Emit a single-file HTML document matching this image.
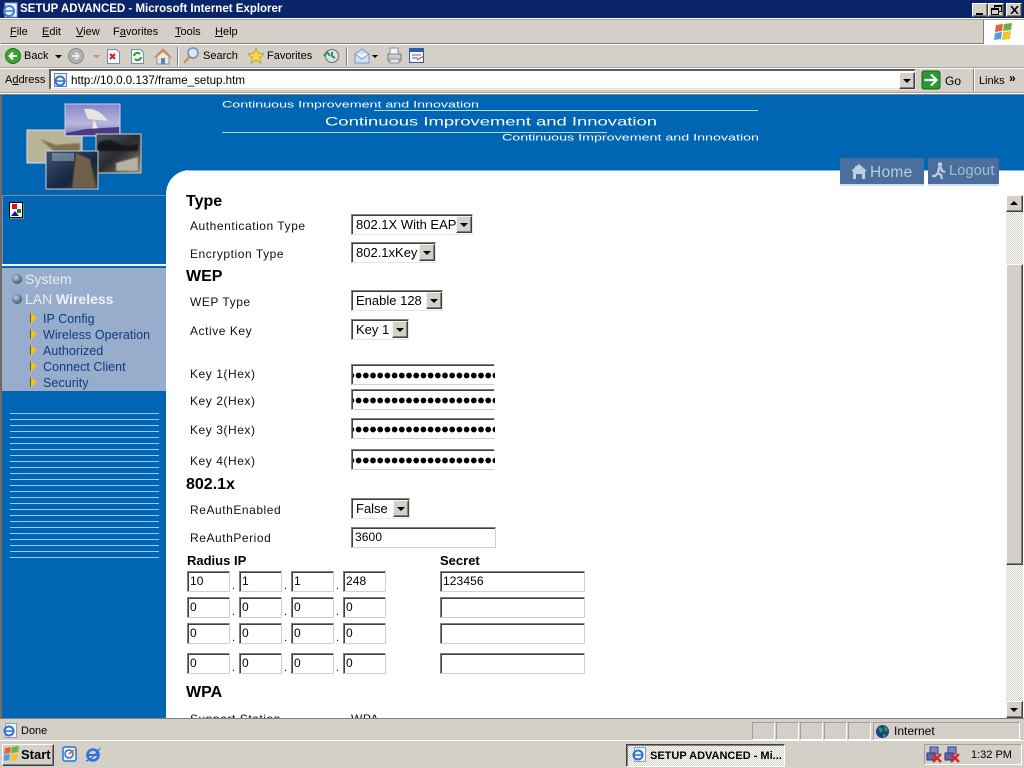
<!DOCTYPE html>
<html><head><meta charset="utf-8"><title>SETUP ADVANCED - Microsoft Internet Explorer</title>
<style>
html,body{margin:0;padding:0;width:1024px;height:768px;overflow:hidden;background:#d4d0c8;font-family:"Liberation Sans",Arial,sans-serif;}
*{box-sizing:border-box}
.a,.t,.l,.h,.s,.i,.k,.n,.m,svg.a{position:absolute}
.t{font-size:11px;line-height:16px;color:#000;white-space:nowrap}
.l{font-size:12px;line-height:16px;color:#111;white-space:nowrap;letter-spacing:.55px;left:190px}
.h{font-size:16px;line-height:18px;font-weight:bold;color:#000;left:186px;white-space:nowrap}
.s{background:#fff;border:1px solid;border-color:#808080 #e8e6e1 #e8e6e1 #808080;box-shadow:inset 1px 1px 0 #404040;font-size:13px;line-height:20px;padding-left:4px;height:21px;color:#000;white-space:nowrap;left:351px}
.s b{position:absolute;right:0;top:1px;width:16px;height:17px;background:#d4d0c8;border:1px solid;border-color:#f4f3f0 #404040 #404040 #f4f3f0;box-shadow:inset -1px -1px 0 #808080}
.s b:after,.dd:after{content:"";position:absolute;left:3px;top:6px;border:4px solid transparent;border-top:4px solid #000;border-bottom:0}
.i{background:#fff;border:1px solid;border-color:#808080 #d4d0c8 #d4d0c8 #808080;box-shadow:inset 1px 1px 0 #404040;font-size:12px;line-height:19px;padding-left:2px;height:21px;color:#000;letter-spacing:.1px;white-space:nowrap}
.k{left:351px;width:144px;height:21px;background-color:#fff;border:1px solid;border-color:#808080 transparent #d4d0c8 #808080;box-shadow:inset 1px 1px 0 #404040;
background-image:radial-gradient(circle at 3.6px 3.5px,#000 2.6px,transparent 3.1px),radial-gradient(circle at 10.8px 3.5px,#000 2.6px,transparent 3.1px),radial-gradient(circle at 18px 3.5px,#000 2.6px,transparent 3.1px),radial-gradient(circle at 25.2px 3.5px,#000 2.6px,transparent 3.1px),radial-gradient(circle at 32.4px 3.5px,#000 2.6px,transparent 3.1px);
background-size:36px 7px;background-repeat:repeat-x;background-position:3px 7px}
.n{font-size:12.5px;line-height:16px;color:#0f3b80;left:43px;white-space:nowrap;letter-spacing:.05px}
.m{left:31px;width:0;height:0;border-left:6px solid #f6c417;border-top:5px solid transparent;border-bottom:5px solid transparent;filter:drop-shadow(-1px 0 0 #6a5a20)}
.b{position:absolute;left:12px;width:10px;height:10px;border-radius:50%;background:radial-gradient(circle at 40% 35%,#c0d0dc,#5a7488 55%,#2c4050)}
.o{position:absolute;background:#d4d0c8;border:1px solid;border-color:#fff #404040 #404040 #fff;box-shadow:inset -1px -1px 0 #808080}
.sep{position:absolute;width:2px;background:#fff;border-left:1px solid #808080}
.pn{position:absolute;top:722px;height:18px;width:23px;border:1px solid;border-color:#a0a0a0 #fff #fff #a0a0a0}
</style></head><body>

<!-- title bar -->
<div class="a" style="left:0;top:0;width:1024px;height:18px;background:#0a246a"></div>
<svg class="a" style="left:2px;top:2px" width="16" height="16" viewBox="0 0 16 16"><rect x="3" y="1" width="12" height="14" fill="#eef2f8" stroke="#8ea0c0"/><circle cx="7" cy="9" r="5" fill="none" stroke="#3a7ed8" stroke-width="2"/><path d="M3 9h8" stroke="#3a7ed8" stroke-width="1.5"/></svg>
<div class="t" style="left:20px;top:1px;color:#fff;font-weight:bold;font-size:11.5px">SETUP ADVANCED - Microsoft Internet Explorer</div>
<div class="o" style="left:972px;top:3px;width:16px;height:14px"><div class="a" style="left:3px;top:9px;width:7px;height:2px;background:#000"></div></div>
<div class="o" style="left:988px;top:3px;width:16px;height:14px"><div class="a" style="left:5px;top:1px;width:8px;height:7px;border:1px solid #000;border-top-width:2px"></div><div class="a" style="left:2px;top:4px;width:8px;height:7px;border:1px solid #000;border-top-width:2px;background:#d4d0c8"></div></div>
<div class="o" style="left:1006px;top:3px;width:16px;height:14px"><svg class="a" style="left:3px;top:2px" width="9" height="8"><path d="M1 0l7 8M8 0l-7 8" stroke="#000" stroke-width="1.6"/></svg></div>

<!-- menu -->
<div class="a" style="left:0;top:18px;width:1024px;height:1px;background:#fff"></div>
<div class="a" style="left:0;top:19px;width:1024px;height:1px;background:#a8a6a0"></div>
<div class="a" style="left:1px;top:43px;width:982px;height:1px;background:#808080"></div>
<div class="a" style="left:0;top:44px;width:1024px;height:1px;background:#fff"></div>
<div class="t" style="left:10px;top:24px"><u>F</u>ile</div>
<div class="t" style="left:42px;top:24px"><u>E</u>dit</div>
<div class="t" style="left:76px;top:24px"><u>V</u>iew</div>
<div class="t" style="left:113px;top:24px">F<u>a</u>vorites</div>
<div class="t" style="left:175px;top:24px"><u>T</u>ools</div>
<div class="t" style="left:215px;top:24px"><u>H</u>elp</div>
<div class="a" style="left:983px;top:20px;width:41px;height:24px;background:#fff;border-left:1px solid #808080"></div>
<svg class="a" style="left:993px;top:22px" width="22" height="20" viewBox="0 0 22 20"><path d="M3 3l7-1-1 7-7 1z" fill="#e8603c"/><path d="M11 2l8-1-1 7-8 1z" fill="#6cb33f"/><path d="M2 11l7-1-1 7-7 1z" fill="#4a9fe8"/><path d="M10 10l8-1-1 8-8 1z" fill="#f6c32c"/></svg>

<!-- toolbar -->
<div class="a" style="left:0;top:67px;width:1024px;height:1px;background:#a8a6a0"></div>
<div class="a" style="left:0;top:68px;width:1024px;height:1px;background:#fff"></div>
<svg class="a" style="left:5px;top:48px" width="170" height="18" viewBox="0 0 170 18">
<circle cx="8" cy="8" r="7.5" fill="#3aa52e" stroke="#1c7a1c"/><path d="M12 8H5M8 4.5L4.5 8 8 11.5" fill="none" stroke="#fff" stroke-width="2"/>
<path d="M50 7h7l-3.500 3.500z" fill="#000"/>
<circle cx="71" cy="8" r="7.500" fill="#b0b0ae" stroke="#8c8c8a"/><path d="M67 8h7M70.500 4.500L74 8l-3.500 3.500" fill="none" stroke="#e8e8e8" stroke-width="2"/>
<path d="M88 7h7l-3.500 3.500z" fill="#a0a0a0"/>
<path d="M102.500 1.500h9l3 3v11h-12z" fill="#f4f6fa" stroke="#7a8ca8"/><path d="M105 6l5 5M110 6l-5 5" stroke="#d0202c" stroke-width="2"/>
<path d="M126.500 1.500h9l3 3v11h-12z" fill="#f4f6fa" stroke="#7a8ca8"/><path d="M129 8a3.500 3.500 0 0 1 6-2M136 9a3.500 3.500 0 0 1-6 2" fill="none" stroke="#2a9a38" stroke-width="2"/>
<path d="M150 9l8-8 8 8h-2v7h-12V9z" fill="#f0e6d8" stroke="#8090a8"/><path d="M150 9l8-8 8 8-2 0-6-5-6 5z" fill="#e88a3c"/><rect x="156" y="10" width="4" height="6" fill="#5a84c0"/>
</svg>
<div class="t" style="left:24px;top:48px">Back</div>
<div class="sep" style="left:177px;top:47px;height:19px"></div>
<svg class="a" style="left:182px;top:47px" width="18" height="18" viewBox="0 0 18 18"><circle cx="11" cy="6" r="5" fill="#d8e8f8" stroke="#6a8cc0" stroke-width="1.500"/><path d="M7 10l-5 6" stroke="#c89a50" stroke-width="2.500"/></svg>
<div class="t" style="left:203px;top:48px">Search</div>
<svg class="a" style="left:248px;top:47px" width="16" height="17" viewBox="0 0 16 17"><path d="M8 1l2.200 5.500 5.800.4-4.500 3.700 1.500 5.700L8 13.200l-5 3.100 1.500-5.700L0 6.900l5.800-.4z" fill="#f8dc3c" stroke="#a89030" stroke-width=".7"/></svg>
<div class="t" style="left:267px;top:48px">Favorites</div>
<svg class="a" style="left:323px;top:48px" width="17" height="16" viewBox="0 0 17 16"><circle cx="9" cy="8" r="6.500" fill="#d8e0e8" stroke="#607080"/><path d="M1 8l3-4 3 4M9 4v4l3 2" fill="none" stroke="#2a8a38" stroke-width="1.800"/></svg>
<div class="sep" style="left:346px;top:47px;height:19px"></div>
<svg class="a" style="left:354px;top:47px" width="80" height="18" viewBox="0 0 80 18"><path d="M1 7l7-5 7 5v9H1z" fill="#cfe0f6" stroke="#7898c8"/><path d="M1 7l7 5 7-5" fill="#f0f4fc" stroke="#7898c8"/><path d="M18 8h6l-3 3z" fill="#000"/>
<rect x="34" y="7" width="13" height="7" fill="#c8ccd4" stroke="#707880"/><rect x="36" y="1" width="8" height="6" fill="#f4f4f4" stroke="#909090"/><rect x="36" y="12" width="9" height="4" fill="#e8e8e8" stroke="#909090"/>
<rect x="55.500" y="1.500" width="14" height="14" fill="#f4f6fa" stroke="#3a5aa0"/><rect x="56" y="2" width="13" height="3" fill="#2a5ab0"/><path d="M58 8h9M58 11h6" stroke="#5a6a90"/><path d="M63 13l7-4" stroke="#d03030"/></svg>

<!-- address -->
<div class="a" style="left:0;top:92px;width:1024px;height:1px;background:#a8a6a0"></div>
<div class="a" style="left:0;top:93px;width:1024px;height:1px;background:#fff"></div>
<div class="a" style="left:0;top:94px;width:1024px;height:1px;background:#808080"></div>
<div class="t" style="left:5px;top:72px">A<u>d</u>dress</div>
<div class="a" style="left:49px;top:69px;width:867px;height:21px;background:#fff;border:2px solid;border-color:#606060 #e8e6e1 #e8e6e1 #606060"></div>
<svg class="a" style="left:52px;top:72px" width="16" height="16" viewBox="0 0 16 16"><rect x="2.500" y="1.500" width="12" height="13" fill="#eef2f8" stroke="#6a7ea8"/><circle cx="8" cy="9" r="4.500" fill="none" stroke="#2a72d8" stroke-width="2"/><path d="M4 9h8" stroke="#2a72d8" stroke-width="1.500"/></svg>
<div class="t" style="left:71px;top:73px;font-size:11.6px">http://10.0.0.137/frame_setup.htm</div>
<div class="o dd" style="left:899px;top:72px;width:16px;height:17px"></div>
<svg class="a" style="left:921px;top:70px" width="20" height="20" viewBox="0 0 20 20"><rect x="1" y="1" width="18" height="18" rx="2" fill="#2a9a2e" stroke="#156a1c"/><path d="M3.500 10h11M10 4.500l5.500 5.500-5.500 5.500" fill="none" stroke="#fff" stroke-width="2.200"/></svg>
<div class="t" style="left:945px;top:73px;font-size:12px">Go</div>
<div class="sep" style="left:973px;top:69px;height:22px"></div>
<div class="t" style="left:979px;top:73px">Links</div>
<div class="t" style="left:1009px;top:70px;font-weight:bold;font-size:12px">»</div>

<!-- page -->
<div class="a" style="left:0;top:95px;width:1024px;height:624px;background:#0066b3;overflow:hidden">
  <div class="a" style="left:0;top:0;width:2px;height:624px;background:#6e6a66"></div>
  <div class="a" style="left:2px;top:100px;width:164px;height:1px;background:#7e8ea0"></div>
  <div class="a" style="left:2px;top:100px;width:1px;height:70px;background:#7e8ea0"></div>
  <div class="a" style="left:2px;top:169px;width:164px;height:2px;background:#fff"></div>
  <div class="a" style="left:2px;top:173px;width:164px;height:123px;background:#98accb"></div>
  <div class="a" style="left:10px;top:318px;width:149px;height:145px;background:repeating-linear-gradient(to bottom,#9ccdf0 0,#9ccdf0 1px,transparent 1px,transparent 6px)"></div>
  <div class="a" style="left:166px;top:75px;width:858px;height:549px;background:#fff;border-top-left-radius:24px"></div>
  <div class="a" style="left:188px;top:75px;width:836px;height:1px;background:#7db5e0"></div>
</div>

<!-- logo collage -->
<svg class="a" style="left:26px;top:103px" width="116" height="87" viewBox="0 0 116 87">
<defs>
<linearGradient id="g1" x1="0" y1="0" x2="0" y2="1"><stop offset="0" stop-color="#8484c8"/><stop offset=".6" stop-color="#b8b8dc"/><stop offset="1" stop-color="#8078b8"/></linearGradient>
<linearGradient id="g3" x1="0" y1="0" x2="1" y2="1"><stop offset="0" stop-color="#4a5468"/><stop offset=".5" stop-color="#2a2c30"/><stop offset="1" stop-color="#8a8478"/></linearGradient>
<linearGradient id="g4" x1="0" y1="0" x2="1" y2="1"><stop offset="0" stop-color="#3c5478"/><stop offset=".6" stop-color="#18243c"/><stop offset="1" stop-color="#4a4434"/></linearGradient>
<filter id="bl"><feGaussianBlur stdDeviation=".8"/></filter>
</defs>
<rect x="1" y="27" width="55" height="33" fill="#b8b498" stroke="#e0e0e0"/><path d="M14 36l16 6 24-2v7l-22 5z" fill="#84704e" filter="url(#bl)"/>
<rect x="39" y="1" width="55" height="32" fill="url(#g1)" stroke="#c8d0e0"/><path d="M58 6q14-2 24 12l-20-2z" fill="#e8e4e0"/><path d="M68 16l-2 10h6z" fill="#f0ece8"/><path d="M40 30l20-4 33-2v8H40z" fill="#4a3c84"/>
<rect x="70" y="31" width="45" height="39" fill="url(#g3)" stroke="#d0d0d0"/><path d="M72 40q10-6 20 0t20 0v8H72z" fill="#14161c" filter="url(#bl)"/><path d="M90 60l22-6v14H90z" fill="#b8b0a4" filter="url(#bl)"/>
<rect x="20" y="48" width="52" height="38" fill="url(#g4)" stroke="#c8d0dc"/><path d="M50 50q8 4 14 6l6 29H46z" fill="#6e6048" filter="url(#bl)"/><path d="M26 50h22v8H26z" fill="#c8d4e4" opacity=".4"/>
</svg>

<!-- broken image icon -->
<div class="a" style="left:9px;top:202px;width:14px;height:16px;background:#fff;border:1px solid #000;box-shadow:1px 1px 0 #808080"></div>
<svg class="a" style="left:10px;top:203px" width="13" height="15" viewBox="0 0 13 15"><rect x="2" y="1" width="5" height="5" fill="#e01010"/><rect x="7" y="6" width="4" height="4" fill="#108030"/><path d="M1 13l4-5 4 5z" fill="#1010c0"/></svg>

<!-- header text -->
<svg class="a" style="left:215px;top:96px" width="560" height="50" viewBox="0 0 560 50" font-family="Liberation Sans, Arial, sans-serif" fill="#fff">
<text x="7" y="11.500" font-size="9" textLength="257" lengthAdjust="spacingAndGlyphs">Continuous Improvement and Innovation</text>
<rect x="159" y="14" width="384" height="1" fill="#b6d8f2"/>
<text x="110" y="29.500" font-size="12" textLength="332" lengthAdjust="spacingAndGlyphs">Continuous Improvement and Innovation</text>
<rect x="7" y="36" width="385" height="1" fill="#b6d8f2"/>
<text x="287" y="44.500" font-size="9" textLength="257" lengthAdjust="spacingAndGlyphs">Continuous Improvement and Innovation</text>
</svg>

<!-- home / logout -->
<div class="a" style="left:840px;top:158px;width:84px;height:26px;background:#4b6f9c"></div>
<div class="a" style="left:840px;top:184px;width:84px;height:2px;background:#d6dfe9"></div>
<div class="a" style="left:928px;top:158px;width:71px;height:26px;background:#4b6f9c"></div>
<div class="a" style="left:928px;top:184px;width:71px;height:2px;background:#d6dfe9"></div>
<svg class="a" style="left:850px;top:163px" width="18" height="17" viewBox="0 0 18 17"><path d="M1 8l8-7 8 7h-2v8h-3v-5H6v5H3V8z" fill="#bcd0e2"/><path d="M5 3h3v2H5z" fill="#bcd0e2"/></svg>
<div class="t" style="left:870px;top:163px;font-size:15.500px;line-height:19px;color:#b8cbdf;letter-spacing:.3px">Home</div>
<svg class="a" style="left:931px;top:162px" width="16" height="18" viewBox="0 0 16 18"><circle cx="9" cy="2.500" r="2.300" fill="#bcd0e2"/><path d="M7 6l3 0 1 3 3 1M8 6l-1 5 3 2 1 4M7 11l-3 3-3 0" fill="none" stroke="#bcd0e2" stroke-width="2.200"/></svg>
<div class="t" style="left:949px;top:162px;font-size:14.500px;line-height:19px;color:#a8bdd5;letter-spacing:.2px">Logout</div>

<!-- nav -->
<div class="b" style="top:274px"></div>
<div class="b" style="top:294px"></div>
<div class="t" style="left:25px;top:271px;font-size:14px;color:#e8edf3">System</div>
<div class="t" style="left:25px;top:291px;font-size:14px;color:#e8edf3">LAN</div>
<div class="t" style="left:56px;top:291px;font-size:14px;color:#eef2f6;font-weight:bold">Wireless</div>
<div class="m" style="top:313px"></div><div class="n" style="top:311px">IP Config</div>
<div class="m" style="top:329px"></div><div class="n" style="top:327px">Wireless Operation</div>
<div class="m" style="top:345px"></div><div class="n" style="top:343px">Authorized</div>
<div class="m" style="top:361px"></div><div class="n" style="top:359px">Connect Client</div>
<div class="m" style="top:377px"></div><div class="n" style="top:375px">Security</div>

<!-- form -->
<div class="h" style="top:193px">Type</div>
<div class="l" style="top:218px">Authentication Type</div>
<div class="s" style="top:214px;width:122px">802.1X With EAP<b></b></div>
<div class="l" style="top:246px">Encryption Type</div>
<div class="s" style="top:242px;width:85px">802.1xKey<b></b></div>
<div class="h" style="top:268px">WEP</div>
<div class="l" style="top:294px">WEP Type</div>
<div class="s" style="top:290px;width:92px">Enable 128<b></b></div>
<div class="l" style="top:323px">Active Key</div>
<div class="s" style="top:319px;width:58px">Key 1<b></b></div>
<div class="l" style="top:366px">Key 1(Hex)</div><div class="k" style="top:364px"></div>
<div class="l" style="top:393px">Key 2(Hex)</div><div class="k" style="top:389px"></div>
<div class="l" style="top:422px">Key 3(Hex)</div><div class="k" style="top:418px"></div>
<div class="l" style="top:453px">Key 4(Hex)</div><div class="k" style="top:449px"></div>
<div class="h" style="top:476px">802.1x</div>
<div class="l" style="top:502px">ReAuthEnabled</div>
<div class="s" style="top:498px;width:59px">False<b></b></div>
<div class="l" style="top:530px">ReAuthPeriod</div>
<div class="i" style="left:351px;top:527px;width:145px;padding-left:3px">3600</div>
<div class="t" style="left:187px;top:553px;font-weight:bold;font-size:13px">Radius IP</div>
<div class="t" style="left:440px;top:553px;font-weight:bold;font-size:13px">Secret</div>

<div class="i" style="left:187px;top:571px;width:43px">10</div><div class="i" style="left:239px;top:571px;width:43px">1</div><div class="i" style="left:291px;top:571px;width:43px">1</div><div class="i" style="left:343px;top:571px;width:43px">248</div><div class="i" style="left:440px;top:571px;width:145px">123456</div>
<div class="i" style="left:187px;top:597px;width:43px">0</div><div class="i" style="left:239px;top:597px;width:43px">0</div><div class="i" style="left:291px;top:597px;width:43px">0</div><div class="i" style="left:343px;top:597px;width:43px">0</div><div class="i" style="left:440px;top:597px;width:145px"></div>
<div class="i" style="left:187px;top:623px;width:43px">0</div><div class="i" style="left:239px;top:623px;width:43px">0</div><div class="i" style="left:291px;top:623px;width:43px">0</div><div class="i" style="left:343px;top:623px;width:43px">0</div><div class="i" style="left:440px;top:623px;width:145px"></div>
<div class="i" style="left:187px;top:653px;width:43px">0</div><div class="i" style="left:239px;top:653px;width:43px">0</div><div class="i" style="left:291px;top:653px;width:43px">0</div><div class="i" style="left:343px;top:653px;width:43px">0</div><div class="i" style="left:440px;top:653px;width:145px"></div>

<div class="t" style="left:232px;top:578px">.</div><div class="t" style="left:284px;top:578px">.</div><div class="t" style="left:336px;top:578px">.</div>
<div class="t" style="left:232px;top:604px">.</div><div class="t" style="left:284px;top:604px">.</div><div class="t" style="left:336px;top:604px">.</div>
<div class="t" style="left:232px;top:630px">.</div><div class="t" style="left:284px;top:630px">.</div><div class="t" style="left:336px;top:630px">.</div>
<div class="t" style="left:232px;top:660px">.</div><div class="t" style="left:284px;top:660px">.</div><div class="t" style="left:336px;top:660px">.</div>

<div class="h" style="top:684px">WPA</div>
<div class="a" style="left:166px;top:700px;width:840px;height:18px;overflow:hidden">
  <div class="l" style="left:24px;top:11px">Support Station</div>
  <div class="l" style="left:185px;top:11px">WPA</div>
</div>

<!-- scrollbar -->
<div class="a" style="left:1006px;top:195px;width:17px;height:523px;background-color:#fff;background-image:conic-gradient(#d4d0c8 25%,#fff 0 50%,#d4d0c8 0 75%,#fff 0);background-size:2px 2px"></div>
<div class="o" style="left:1006px;top:195px;width:17px;height:17px"><div class="a" style="left:3px;top:5px;border:4px solid transparent;border-bottom:4px solid #000;border-top:0"></div></div>
<div class="o" style="left:1006px;top:264px;width:17px;height:301px"></div>
<div class="o" style="left:1006px;top:701px;width:17px;height:17px"><div class="a" style="left:3px;top:6px;border:4px solid transparent;border-top:4px solid #000;border-bottom:0"></div></div>

<!-- status bar -->
<div class="a" style="left:0;top:718px;width:1024px;height:1px;background:#808080"></div>
<div class="a" style="left:0;top:719px;width:1024px;height:22px;background:#d4d0c8"></div>
<svg class="a" style="left:2px;top:722px" width="16" height="17" viewBox="0 0 16 17"><rect x="3.500" y="1.500" width="11" height="14" fill="#eef2f8" stroke="#8ea0c0"/><circle cx="7" cy="9" r="4.500" fill="none" stroke="#2a72d8" stroke-width="2"/><path d="M3 9h8" stroke="#2a72d8" stroke-width="1.500"/></svg>
<div class="t" style="left:21px;top:723px">Done</div>
<div class="pn" style="left:752px"></div><div class="pn" style="left:776px"></div><div class="pn" style="left:800px"></div><div class="pn" style="left:824px"></div><div class="pn" style="left:848px"></div>
<div class="pn" style="left:873px;width:147px"></div>
<svg class="a" style="left:875px;top:724px" width="15" height="15" viewBox="0 0 15 15"><circle cx="7.500" cy="7.500" r="6.500" fill="#1c3c9c"/><path d="M3 3l4 1 1 3-3 2zM9 2l4 3-1 3-3-2zM8 10l3 0-1 3-2 0z" fill="#2ca02c"/></svg>
<div class="t" style="left:894px;top:723px;font-size:12px">Internet</div>

<!-- taskbar -->
<div class="a" style="left:0;top:740px;width:1024px;height:1px;background:#fff"></div>
<div class="a" style="left:0;top:741px;width:1024px;height:27px;background:#d4d0c8"></div>
<div class="o" style="left:2px;top:744px;width:52px;height:22px"></div>
<svg class="a" style="left:4px;top:746px" width="16" height="16" viewBox="0 0 16 16"><path d="M1 2l6-1-1 6-6 1z" fill="#e8603c"/><path d="M8 1l7-1-1 6-7 1z" fill="#6cb33f"/><path d="M0 9l6-1-1 6-6 1z" fill="#4a9fe8"/><path d="M7 8l7-1-1 7-7 1z" fill="#f6c32c"/></svg>
<div class="t" style="left:21px;top:747px;font-weight:bold;font-size:13px">Start</div>
<svg class="a" style="left:61px;top:746px" width="17" height="17" viewBox="0 0 17 17"><rect x="2" y="1" width="13" height="14" rx="2" fill="#eef4fc" stroke="#2a72d8" stroke-width="1.500"/><circle cx="8" cy="8" r="4" fill="none" stroke="#2a72d8" stroke-width="1.500"/><path d="M8 8l5-4" stroke="#d86030" stroke-width="1.500"/></svg>
<svg class="a" style="left:85px;top:746px" width="16" height="17" viewBox="0 0 16 17"><circle cx="8" cy="9" r="5.500" fill="none" stroke="#2a72d8" stroke-width="2.600"/><path d="M3 9h10" stroke="#2a72d8" stroke-width="2"/><path d="M1 15q6-1 14-13" fill="none" stroke="#2a72d8" stroke-width="1.200"/></svg>
<div class="a" style="left:626px;top:744px;width:159px;height:23px;background-color:#fff;background-image:conic-gradient(#d4d0c8 25%,#fff 0 50%,#d4d0c8 0 75%,#fff 0);background-size:2px 2px;border:1px solid;border-color:#404040 #fff #fff #404040;box-shadow:inset 1px 1px 0 #808080"></div>
<svg class="a" style="left:631px;top:746px" width="16" height="18" viewBox="0 0 16 18"><rect x="3.500" y="1.500" width="11" height="14" fill="#eef2f8" stroke="#8ea0c0"/><circle cx="7" cy="9" r="4.500" fill="none" stroke="#2a72d8" stroke-width="2"/><path d="M3 9h8" stroke="#2a72d8" stroke-width="1.500"/></svg>
<div class="t" style="left:650px;top:748px;font-weight:bold;font-size:11px">SETUP ADVANCED - Mi...</div>
<div class="a" style="left:924px;top:744px;width:98px;height:21px;border:1px solid;border-color:#a0a0a0 #fff #fff #a0a0a0"></div>
<svg class="a" style="left:926px;top:746px" width="40" height="18" viewBox="0 0 40 18"><rect x="4" y="1" width="8" height="7" fill="#7888c8" stroke="#384888"/><rect x="1" y="7" width="8" height="7" fill="#5868a8" stroke="#283878"/><path d="M7 8l8 8M15 8l-8 8" stroke="#e02020" stroke-width="2.400"/><rect x="22" y="1" width="8" height="7" fill="#7888c8" stroke="#384888"/><rect x="19" y="7" width="8" height="7" fill="#5868a8" stroke="#283878"/><path d="M25 8l8 8M33 8l-8 8" stroke="#e02020" stroke-width="2.400"/></svg>
<div class="t" style="left:971px;top:747px">1:32 PM</div>
</body></html>
